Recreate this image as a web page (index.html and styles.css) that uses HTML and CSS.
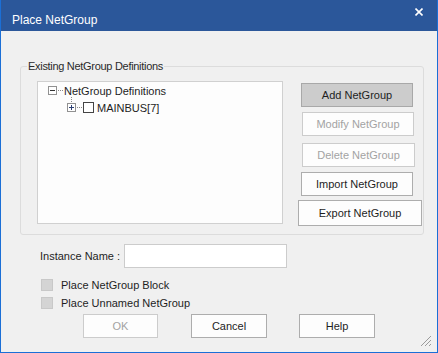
FILE: index.html
```html
<!DOCTYPE html>
<html lang="en">
<head>
    <meta charset="UTF-8">
    <title>Place NetGroup</title>
    <link rel="stylesheet" href="styles.css">
</head>
<body>
    <div class="dialog">
        <div class="titlebar">
            <span class="title">Place NetGroup</span>
            <svg class="close" width="8" height="8" viewBox="0 0 8 8">
                <path d="M0.5 0.5 L7.5 7.5 M7.5 0.5 L0.5 7.5" stroke="#fff" stroke-width="1.6"/>
            </svg>
        </div>
        <div class="content">
            <fieldset class="group">
                <legend>Existing NetGroup Definitions</legend>
                <div class="group_inner">
                    <div class="tree">
                        <div class="node root">
                            <svg class="expander" width="9" height="9" viewBox="0 0 9 9">
                                <rect x="0.5" y="0.5" width="8" height="8" fill="#fff" stroke="#919191"/>
                                <path d="M2 4.5 H7" stroke="#333" stroke-width="1"/>
                            </svg>
                            <span class="dots"></span>
                            <span class="node_text">NetGroup Definitions</span>
                        </div>
                        <div class="node child">
                            <span class="vline"></span>
                            <svg class="expander" width="9" height="9" viewBox="0 0 9 9">
                                <rect x="0.5" y="0.5" width="8" height="8" fill="#fff" stroke="#919191"/>
                                <path d="M2 4.5 H7 M4.5 2 V7" stroke="#2b3f73" stroke-width="1"/>
                            </svg>
                            <span class="dots"></span>
                            <span class="tree_check"></span>
                            <span class="node_text">MAINBUS[7]</span>
                        </div>
                    </div>
                    <div class="side_buttons">
                        <button class="btn btn_add">Add NetGroup</button>
                        <button class="btn btn_modify" disabled>Modify NetGroup</button>
                        <button class="btn btn_delete" disabled>Delete NetGroup</button>
                        <button class="btn btn_import">Import NetGroup</button>
                        <button class="btn btn_export">Export NetGroup</button>
                    </div>
                </div>
            </fieldset>
            <div class="instance_row">
                <label class="instance_label">Instance Name :</label>
                <input class="instance_input" type="text">
            </div>
            <div class="check_row first">
                <span class="check"></span>
                <span>Place NetGroup Block</span>
            </div>
            <div class="check_row">
                <span class="check"></span>
                <span>Place Unnamed NetGroup</span>
            </div>
            <div class="bottom_buttons">
                <button class="btn btn_ok" disabled>OK</button>
                <button class="btn btn_cancel">Cancel</button>
                <button class="btn btn_help">Help</button>
            </div>
        </div>
        <svg class="grip" width="12" height="12" viewBox="0 0 12 12">
            <path d="M11 1 L1 11 M11 5 L5 11 M11 9 L9 11" stroke="#9a9a9a" stroke-width="1"/>
        </svg>
    </div>
</body>
</html>
```

FILE: styles.css
```css
body{
    margin:0;
    font-family:"Liberation Sans", Arial, sans-serif;
    font-size:11px;
    color:#1e1e1e;
}
.dialog{
    position:relative;
    width:438px;
    height:353px;
    box-sizing:border-box;
    border:1px solid #1b6fd6;
    border-top:none;
    background:#f0f0f0;
}
.titlebar{
    height:31px;
    background:#2b579a;
    display:flex;
    align-items:flex-start;
    justify-content:space-between;
    color:#fff;
}
.title{
    font-size:12px;
    margin:13px 0 0 11px;
}
.close{
    margin:8px 14px 0 0;
}
.content{
    padding-top:27px;
}
.group{
    margin:0 13px 0 19px;
    padding:0;
    border:1px solid #dcdcdc;
    border-radius:3px;
    min-inline-size:0;
}
.group legend{
    margin-left:6px;
    padding:0 1px;
    line-height:16px;
    letter-spacing:-0.3px;
    color:#2a2a2a;
}
.group_inner{
    display:flex;
    padding:7px 0 8px 16px;
}
.tree{
    width:246px;
    height:143px;
    box-sizing:border-box;
    border:1px solid #d0d0d0;
    background:#fdfdfd;
}
.node{
    display:flex;
    align-items:center;
    height:17px;
    position:relative;
}
.root{
    padding-left:10px;
}
.child{
    padding-left:29px;
}
.expander{
    flex:none;
}
.dots{
    width:5px;
    height:1px;
    margin:0 1px 0 1px;
    background:repeating-linear-gradient(to right,#8a8a8a 0 1px,transparent 1px 2px);
}
.vline{
    position:absolute;
    left:33px;
    top:-2px;
    width:1px;
    height:6px;
    background:repeating-linear-gradient(to bottom,#8a8a8a 0 1px,transparent 1px 2px);
}
.tree_check{
    width:11px;
    height:11px;
    box-sizing:border-box;
    border:1px solid #444;
    background:#fff;
    margin:0 3px 0 0;
}
.node_text{
    color:#1e1e1e;
}
.side_buttons{
    display:flex;
    flex-direction:column;
    align-items:flex-start;
    margin-left:15px;
}
.btn{
    font-family:"Liberation Sans", Arial, sans-serif;
    font-size:11px;
    height:24px;
    padding:0;
    background:#fdfdfd;
    border:1px solid #adadad;
    color:#1e1e1e;
}
.btn:disabled{
    border-color:#cccccc;
    color:#a3a3a3;
}
.btn_add{
    width:112px;
    margin:2px 0 0 3px;
    background:#cccccc;
    border-color:#a8a8a8;
}
.btn_modify{
    width:112px;
    margin:5px 0 0 4px;
}
.btn_delete{
    width:113px;
    margin:7px 0 0 4px;
}
.btn_import{
    width:112px;
    margin:5px 0 0 3px;
}
.btn_export{
    width:124px;
    height:26px;
    margin:4px 0 0 0;
}
.instance_row{
    display:flex;
    align-items:center;
    margin:9px 0 0 39px;
}
.instance_label{
    width:84px;
}
.instance_input{
    width:163px;
    height:24px;
    box-sizing:border-box;
    margin:0;
    border:1px solid #cccccc;
    background:#fff;
}
.check_row{
    display:flex;
    align-items:center;
    height:18px;
    margin-left:40px;
}
.check_row.first{
    margin-top:8px;
}
.check{
    width:12px;
    height:12px;
    box-sizing:border-box;
    border:1px solid #c8c8c8;
    background:#d4d4d4;
    margin-right:8px;
}
.bottom_buttons{
    display:flex;
    gap:33px;
    margin:2px 0 0 82px;
}
.btn_ok{
    width:75px;
}
.btn_cancel{
    width:76px;
}
.btn_help{
    width:76px;
    margin-left:-1px;
}
.grip{
    position:absolute;
    right:5px;
    bottom:5px;
}
```
